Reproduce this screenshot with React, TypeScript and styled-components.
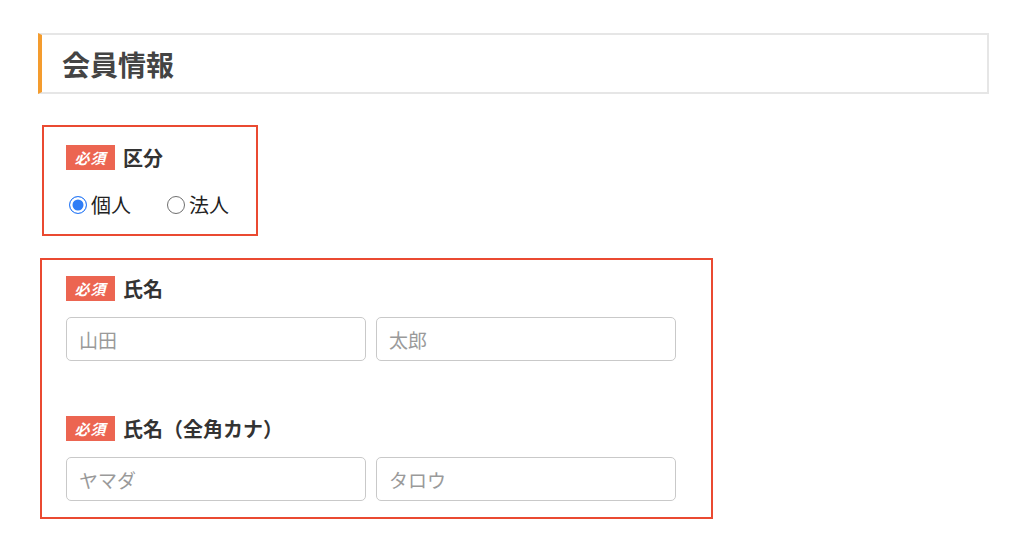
import styled, { createGlobalStyle } from "styled-components";

const GlobalStyle = createGlobalStyle`
  body {
    margin: 0;
    background: #fff;
    font-family: "Noto Sans CJK JP", "Noto Sans", sans-serif;
    color: #333;
  }
`;

const Page = styled.div`
  padding: 33px 0 0 38px;
  width: 951px;
`;

const SectionHeader = styled.div`
  display: flex;
  align-items: center;
  box-sizing: border-box;
  height: 61px;
  padding-left: 20px;
  border: 2px solid #e6e6e6;
  border-left: 4px solid #f49c2e;
`;

const SectionTitle = styled.h2`
  margin: 0;
  font-size: 28px;
  font-weight: 700;
  color: #444;
  line-height: 1;
`;

const FieldBox = styled.div<{ $offset: number; $width: number; $top: number }>`
  box-sizing: border-box;
  width: ${({ $width }) => $width}px;
  margin: ${({ $top }) => $top}px 0 0 ${({ $offset }) => $offset}px;
  border: 2px solid #ea4a31;
  padding: ${({ $offset }) => ($offset > 3 ? "18px 22px" : "16px 24px")};
`;

const FieldGroup = styled.div`
  & + & {
    margin-top: 55px;
  }
`;

const LabelRow = styled.div`
  display: flex;
  align-items: center;
  gap: 8px;
  height: 25px;
`;

const Badge = styled.span`
  display: inline-flex;
  align-items: center;
  justify-content: center;
  width: 49px;
  height: 25px;
  background: #ec6551;
  color: #fff;
  font-size: 15px;
  font-style: italic;
  font-weight: 700;
  letter-spacing: 1px;
`;

const LabelText = styled.span`
  font-size: 20px;
  font-weight: 700;
  color: #333;
  line-height: 1;
`;

const RadioRow = styled.div`
  display: flex;
  align-items: center;
  gap: 33px;
  margin-top: 24px;
  height: 22px;
`;

const RadioOption = styled.label`
  display: flex;
  align-items: center;
  gap: 4px;
  font-size: 20px;
  color: #222;
  line-height: 1;
`;

const RadioMark = styled.span<{ $checked?: boolean }>`
  box-sizing: border-box;
  width: 18px;
  height: 18px;
  margin-left: 3px;
  border-radius: 50%;
  border: ${({ $checked }) =>
    $checked ? "1.5px solid #2f7df6" : "1px solid #6f6f6f"};
  background: ${({ $checked }) => ($checked ? "#2f7df6" : "#fff")};
  box-shadow: ${({ $checked }) => ($checked ? "inset 0 0 0 2.5px #fff" : "none")};
`;

const InputRow = styled.div`
  display: flex;
  gap: 10px;
  margin-top: 16px;
`;

const TextInput = styled.input`
  box-sizing: border-box;
  width: 300px;
  height: 44px;
  padding: 0 12px;
  border: 1.5px solid #c9c9c9;
  border-radius: 5px;
  font-family: inherit;
  font-size: 19px;
  color: #333;
  outline: 0;

  &::placeholder {
    color: #9a9a9a;
  }
`;

const Label = ({ text }: { text: string }) => (
  <LabelRow>
    <Badge>必須</Badge>
    <LabelText>{text}</LabelText>
  </LabelRow>
);

export default function App() {
  return (
    <>
      <GlobalStyle />
      <Page>
        <SectionHeader>
          <SectionTitle>会員情報</SectionTitle>
        </SectionHeader>

        <FieldBox $offset={4} $width={216} $top={31}>
          <Label text="区分" />
          <RadioRow>
            <RadioOption>
              <RadioMark $checked />
              個人
            </RadioOption>
            <RadioOption>
              <RadioMark />
              法人
            </RadioOption>
          </RadioRow>
        </FieldBox>

        <FieldBox $offset={2} $width={673} $top={22}>
          <FieldGroup>
            <Label text="氏名" />
            <InputRow>
              <TextInput placeholder="山田" />
              <TextInput placeholder="太郎" />
            </InputRow>
          </FieldGroup>
          <FieldGroup>
            <Label text="氏名（全角カナ）" />
            <InputRow>
              <TextInput placeholder="ヤマダ" />
              <TextInput placeholder="タロウ" />
            </InputRow>
          </FieldGroup>
        </FieldBox>
      </Page>
    </>
  );
}
